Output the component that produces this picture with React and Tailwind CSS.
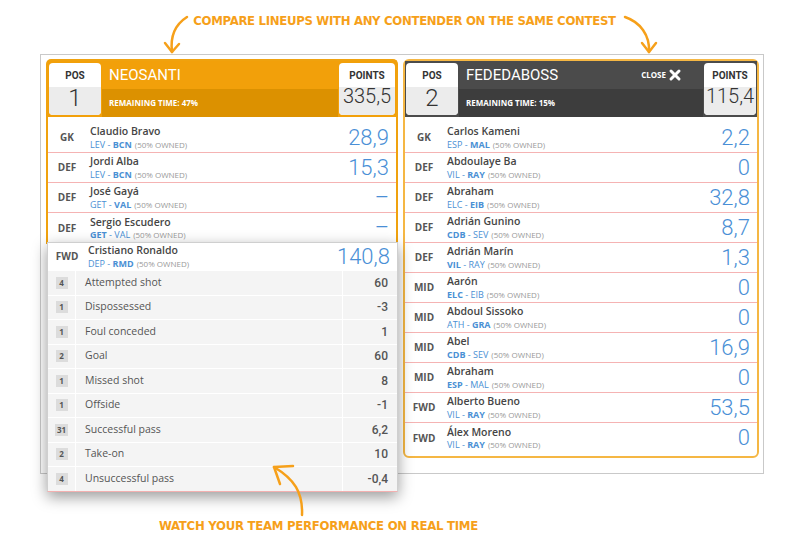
import { X } from 'lucide-react';

const left = [
  { pos: 'GK', name: 'Claudio Bravo', home: 'LEV', away: 'BCN', b: 1, pts: '28,9' },
  { pos: 'DEF', name: 'Jordi Alba', home: 'LEV', away: 'BCN', b: 1, pts: '15,3' },
  { pos: 'DEF', name: 'José Gayá', home: 'GET', away: 'VAL', b: 1, pts: '–' },
  { pos: 'DEF', name: 'Sergio Escudero', home: 'GET', away: 'VAL', b: 0, pts: '–' },
];

const right = [
  { pos: 'GK', name: 'Carlos Kameni', home: 'ESP', away: 'MAL', b: 1, pts: '2,2' },
  { pos: 'DEF', name: 'Abdoulaye Ba', home: 'VIL', away: 'RAY', b: 1, pts: '0' },
  { pos: 'DEF', name: 'Abraham', home: 'ELC', away: 'EIB', b: 1, pts: '32,8' },
  { pos: 'DEF', name: 'Adrián Gunino', home: 'CDB', away: 'SEV', b: 0, pts: '8,7' },
  { pos: 'DEF', name: 'Adrián Marín', home: 'VIL', away: 'RAY', b: 0, pts: '1,3' },
  { pos: 'MID', name: 'Aarón', home: 'ELC', away: 'EIB', b: 0, pts: '0' },
  { pos: 'MID', name: 'Abdoul Sissoko', home: 'ATH', away: 'GRA', b: 1, pts: '0' },
  { pos: 'MID', name: 'Abel', home: 'CDB', away: 'SEV', b: 0, pts: '16,9' },
  { pos: 'MID', name: 'Abraham', home: 'ESP', away: 'MAL', b: 0, pts: '0' },
  { pos: 'FWD', name: 'Alberto Bueno', home: 'VIL', away: 'RAY', b: 1, pts: '53,5' },
  { pos: 'FWD', name: 'Álex Moreno', home: 'VIL', away: 'RAY', b: 1, pts: '0' },
];

const stats = [
  ['4', 'Attempted shot', '60'],
  ['1', 'Dispossessed', '-3'],
  ['1', 'Foul conceded', '1'],
  ['2', 'Goal', '60'],
  ['1', 'Missed shot', '8'],
  ['1', 'Offside', '-1'],
  ['31', 'Successful pass', '6,2'],
  ['2', 'Take-on', '10'],
  ['4', 'Unsuccessful pass', '-0,4'],
];

function PlayerRow({ p, last, h = 'h-[30px]', name = 'pl-[4px]' }) {
  return (
    <div className={`flex items-center ${h} ${last ? '' : 'border-b border-[#f5b3b3]'}`}>
      <div className="w-[38px] text-center text-[10px] font-bold text-[#555]">{p.pos}</div>
      <div className={`flex-1 ${name} leading-none`}>
        <div className="text-[10.5px] font-semibold text-[#454545]">{p.name}</div>
        <div className="mt-[3px] text-[9px] text-[#4a90d4]">
          <span className={p.b === 0 ? 'font-bold' : ''}>{p.home}</span>
          {' - '}
          <span className={p.b === 1 ? 'font-bold' : ''}>{p.away}</span>
          <span className="ml-[3px] text-[8px] text-[#999]">(50% OWNED)</span>
        </div>
      </div>
      <div className="pr-[7px] font-['Roboto'] text-[22px] font-light leading-none text-[#4a8fd6]">{p.pts}</div>
    </div>
  );
}

function Box({ label, value, w }) {
  return (
    <div className={`${w} my-[2px] mx-[1px] flex flex-col overflow-hidden rounded-[4px] bg-white`}>
      <div className="flex h-[24px] items-center justify-center font-['Roboto'] text-[10px] font-bold text-[#333]">
        {label}
      </div>
      <div className="flex flex-1 items-start justify-center bg-[#ececec] font-['Roboto'] text-[20px] font-light leading-none text-[#333]">
        <span className="-mt-[1px]">{value}</span>
      </div>
    </div>
  );
}

function Header({ pos, name, time, points, dark, close, pw }) {
  return (
    <div className={`flex h-[56px] ${dark ? 'bg-[#4b4b4b]' : 'bg-[#f2a00a]'}`}>
      <Box label="POS" value={<span className="text-[24px]">{pos}</span>} w="w-[52px]" />
      <div className="flex flex-1 flex-col">
        <div className="flex h-[28px] items-center justify-between pl-[7px] pr-[20px]">
          <span className="font-['Roboto'] text-[15px] text-white">{name}</span>
          {close && (
            <span className="flex items-center gap-[1px] text-[8px] font-bold text-white">
              CLOSE
              <X size={16} strokeWidth={4.5} />
            </span>
          )}
        </div>
        <div className={`flex flex-1 items-center pl-[7px] text-[8px] font-bold text-white ${dark ? 'bg-[#3d3d3d]' : 'bg-[#dc9100]'}`}>
          REMAINING TIME: {time}
        </div>
      </div>
      <Box label="POINTS" value={points} w={pw} />
    </div>
  );
}

export default function App() {
  return (
    <div className="relative h-[550px] w-[809px] overflow-hidden bg-white font-['Open_Sans',sans-serif]">
      <div className="flex h-[54px] justify-center pt-[13px]">
        <span className="font-['DejaVu_Sans',sans-serif] font-stretch-condensed text-[13px] font-bold leading-[16px] tracking-[-0.3px] text-[#f6a01a]">
          COMPARE LINEUPS WITH ANY CONTENDER ON THE SAME CONTEST
        </span>
      </div>

      <div className="ml-[40px] flex h-[420px] w-[724px] gap-[5px] border border-[#c9c9c9] pl-[5px] pt-[4px]">
        <div className="flex w-[352px] flex-col">
          <div className="rounded-t-[5px] border-2 border-b-0 border-[#f0a20e] pb-[1px]">
            <Header pos="1" name="NEOSANTI" time="47%" points="335,5" pw="w-[56px]" />
            <div className="pt-[6px]">
              {left.map((p, i) => (
                <PlayerRow key={i} p={p} last={i === left.length - 1} />
              ))}
            </div>
          </div>
          <div className="relative z-10 -mt-[2px] ml-[1px] border border-[#cfcfcf] border-b-[#f3b0b0] bg-white shadow-[0_5px_14px_rgba(0,0,0,0.4)]">
            <PlayerRow p={{ pos: 'FWD', name: 'Cristiano Ronaldo', home: 'DEP', away: 'RMD', b: 1, pts: '140,8' }} last h="h-[27px]" name="pl-[2px]" />
            {stats.map(([n, label, v], i) => (
              <div key={i} className="flex h-[24.5px] border-t border-white bg-[#f4f4f4] text-[10.5px] text-[#555]">
                <div className="flex w-[28px] items-center justify-center border-r border-white">
                  <span className="flex h-[12px] min-w-[12px] items-center justify-center bg-[#dcdcdc] px-[2px] text-[8px] font-bold text-[#555]">
                    {n}
                  </span>
                </div>
                <div className="flex flex-1 items-center pl-[9px]">{label}</div>
                <div className="flex w-[55px] items-center justify-end border-l border-white pr-[9px] font-['Roboto'] text-[12px] font-medium text-[#555]">
                  {v}
                </div>
              </div>
            ))}
          </div>
        </div>

        <div className="self-start w-[356px] rounded-[6px] border-2 border-[#f5b744] pb-[3px]">
          <Header pos="2" name="FEDEDABOSS" time="15%" points="115,4" dark close pw="w-[52px]" />
          <div className="pt-[6px]">
            {right.map((p, i) => (
              <PlayerRow key={i} p={p} last={i === right.length - 1} />
            ))}
          </div>
        </div>
      </div>

      <div className="mt-[45px] pl-[159px] font-['DejaVu_Sans',sans-serif] font-stretch-condensed text-[13px] font-bold leading-[14px] tracking-[-0.25px] text-[#f6a01a]">
        WATCH YOUR TEAM PERFORMANCE ON REAL TIME
      </div>

      <svg className="pointer-events-none absolute inset-0 z-20" width="809" height="550" fill="none" stroke="#f6a01a" strokeWidth="2.5" strokeLinecap="round" strokeLinejoin="round">
        <path d="M187 17 C176 24 170 36 172 52" />
        <path d="M165 43 L172 52 L179 44" />
        <path d="M625 17 C640 22 650 35 649 52" />
        <path d="M642 43 L649 52 L656 43" />
        <path d="M302 515 C303 492 294 479 274 467" />
        <path d="M293 466 L274 467 L280 484" />
      </svg>
    </div>
  );
}
